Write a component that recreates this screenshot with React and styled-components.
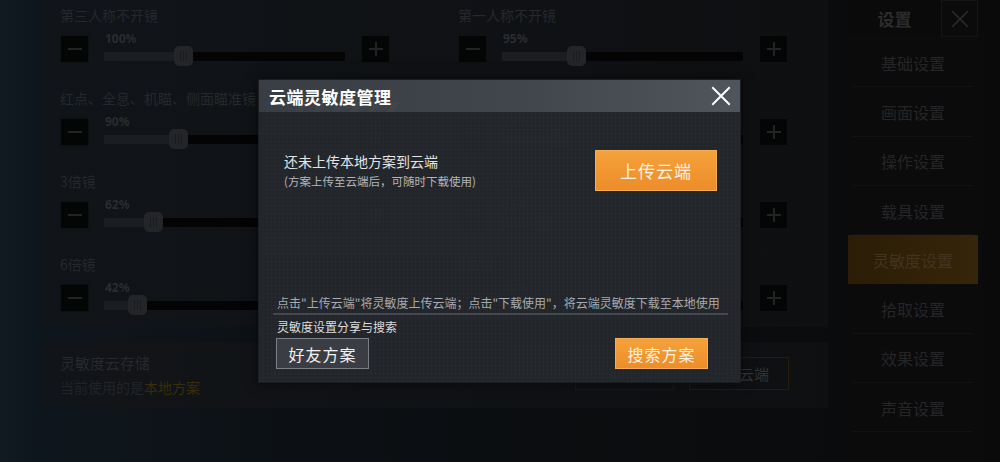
import React from 'react';
import styled, { createGlobalStyle } from 'styled-components';

const GlobalStyle = createGlobalStyle`
  html, body { margin: 0; padding: 0; width: 1000px; height: 462px; overflow: hidden; background: #0b0c0e; }
  body { font-family: "Noto Sans CJK SC", "Noto Sans", sans-serif; }
  * { box-sizing: border-box; }
`;

const Screen = styled.div`
  position: relative;
  width: 1000px;
  height: 462px;
  overflow: hidden;
  display: flex;
  background: linear-gradient(90deg, #111a22 0%, #0e161d 4%, #0c1014 30%, #0b0c0e 70%, #0a0a0b 100%);
`;

const Gutter = styled.div`
  width: 40px;
  flex: none;
`;

const MainColumn = styled.div`
  width: 788px;
  flex: none;
  display: flex;
  flex-direction: column;
  gap: 15px;
`;

const SlidersCard = styled.div`
  height: 327px;
  padding: 5px 39px 0 20px;
  display: grid;
  grid-template-columns: 330px 331px;
  column-gap: 68px;
  background: linear-gradient(90deg, rgba(17, 20, 24, 0.85), rgba(15, 16, 18, 0.85));
`;

const Column = styled.div`
  display: flex;
  flex-direction: column;
  gap: 22px;
`;

const Row = styled.div`
  display: flex;
  flex-direction: column;
`;

const Label = styled.div`
  font-size: 14px;
  line-height: 20px;
  height: 20px;
  color: #25282d;
  margin-bottom: 7px;
  white-space: nowrap;
`;

const Controls = styled.div`
  height: 34px;
  display: flex;
  align-items: center;
`;

const StepButton = styled.div`
  width: 29px;
  height: 28px;
  flex: none;
  background: #040505;
  border: 1px solid #0f1012;
  display: flex;
  align-items: center;
  justify-content: center;
`;

const SliderWrap = styled.div`
  width: 241px;
  flex: none;
  margin: 0 16px 0 15px;
  display: flex;
  flex-direction: column;
`;

const Percent = styled.div`
  font-family: "Noto Sans", "Noto Sans CJK SC", sans-serif;
  font-weight: 700;
  font-size: 12px;
  line-height: 14px;
  color: #2a2c30;
  padding-left: 1px;
`;

const TrackArea = styled.div`
  position: relative;
  height: 20px;
  display: flex;
  align-items: center;
`;

const TrackBar = styled.div`
  width: 100%;
  height: 9px;
  border-radius: 1px;
  background: linear-gradient(90deg, #1b1d20 ${(p) => p.$pos}%, #040405 ${(p) => p.$pos}%);
`;

const Thumb = styled.div`
  position: absolute;
  top: 0;
  width: 19px;
  height: 20px;
  border-radius: 5px;
  background: #242528;
  display: flex;
  align-items: center;
  justify-content: center;
  gap: 2px;
  & > i {
    display: block;
    width: 1px;
    height: 10px;
    background: #1a1b1d;
  }
`;

const CloudCard = styled.div`
  height: 66px;
  padding: 0 39px 0 20px;
  display: flex;
  align-items: center;
  justify-content: space-between;
  background: linear-gradient(90deg, rgba(18, 20, 24, 0.9), rgba(15, 16, 18, 0.9));
`;

const CloudText = styled.div`
  display: flex;
  flex-direction: column;
`;

const CloudTitle = styled.div`
  font-size: 15px;
  line-height: 24px;
  color: #26292d;
`;

const CloudSub = styled.div`
  font-size: 14px;
  line-height: 24px;
  color: #212428;
  & > span {
    color: #382d08;
  }
`;

const CloudButtons = styled.div`
  display: flex;
  gap: 15px;
  margin-top: -3px;
`;

const GhostButton = styled.div`
  width: ${(p) => p.$w}px;
  height: 33px;
  border: 1px solid ${(p) => (p.$accent ? '#261b0c' : '#19191b')};
  color: #323335;
  font-size: 15px;
  display: flex;
  align-items: center;
  justify-content: center;
`;

const Sidebar = styled.div`
  width: 130px;
  flex: none;
  margin-left: 20px;
  display: flex;
  flex-direction: column;
  background: #0b0b0c;
`;

const SideHeader = styled.div`
  height: 37px;
  display: flex;
  margin-bottom: 1px;
`;

const SideTitle = styled.div`
  flex: 1;
  display: flex;
  align-items: center;
  justify-content: center;
  font-size: 17px;
  font-weight: 700;
  color: #2c2c2e;
  background: #0a0a0b;
`;

const SideClose = styled.div`
  width: 37px;
  height: 37px;
  border: 1px solid #141416;
  display: flex;
  align-items: center;
  justify-content: center;
`;

const SideItem = styled.div`
  height: 49.3px;
  display: flex;
  align-items: center;
  justify-content: center;
  font-size: 16px;
  color: ${(p) => (p.$active ? '#433420' : '#252527')};
  background: ${(p) =>
    p.$active
      ? 'linear-gradient(90deg, #2b1d06, #35250a)'
      : 'linear-gradient(#121213, #121213) no-repeat center bottom / calc(100% - 10px) 1px'};
`;

const Dialog = styled.div`
  position: absolute;
  left: 258px;
  top: 79px;
  width: 483px;
  height: 304px;
  display: flex;
  flex-direction: column;
  border: 1px solid #1b1d20;
  box-shadow: 0 0 12px rgba(0, 0, 0, 0.5);
`;

const DialogHeader = styled.div`
  height: 32px;
  flex: none;
  display: flex;
  align-items: center;
  justify-content: space-between;
  padding: 0 9px 0 10px;
  background:
    repeating-linear-gradient(120deg, rgba(255, 255, 255, 0) 0 10px, rgba(255, 255, 255, 0.025) 10px 16px) 30px 22px / 110px 10px no-repeat,
    linear-gradient(90deg, #393e44 0%, #40454b 50%, #4f555c 100%);
`;

const DialogTitle = styled.div`
  font-size: 17px;
  font-weight: 700;
  color: #ffffff;
  letter-spacing: 0.5px;
`;

const DialogBody = styled.div`
  flex: 1;
  display: flex;
  flex-direction: column;
  background-color: rgba(36, 39, 43, 0.95);
  background-image:
    repeating-linear-gradient(0deg, rgba(255, 255, 255, 0.012) 0 1px, transparent 1px 4px),
    repeating-linear-gradient(90deg, rgba(255, 255, 255, 0.012) 0 1px, transparent 1px 4px);
`;

const TopRow = styled.div`
  display: flex;
  align-items: center;
  justify-content: space-between;
  padding: 38px 23px 0 25px;
`;

const UploadInfo = styled.div`
  display: flex;
  flex-direction: column;
`;

const UploadTitle = styled.div`
  font-size: 14px;
  line-height: 20px;
  color: #e4e4e4;
`;

const UploadSub = styled.div`
  font-size: 11.5px;
  line-height: 20px;
  color: #b2b5ba;
`;

const OrangeButton = styled.div`
  width: ${(p) => p.$w}px;
  height: ${(p) => p.$h}px;
  font-size: ${(p) => p.$fs}px;
  display: flex;
  align-items: center;
  justify-content: center;
  color: #fff3e4;
  letter-spacing: 1px;
  border: 1px solid #f6ae55;
  background: linear-gradient(180deg, #f5a23c 0%, #f0952f 60%, #ec8d2a 100%);
`;

const Spacer = styled.div`
  flex: 1;
`;

const Bottom = styled.div`
  display: flex;
  flex-direction: column;
  padding: 0 12px 13px 14px;
`;

const InfoText = styled.div`
  font-size: 12px;
  line-height: 16px;
  color: #a7aaaf;
  padding-left: 4px;
  margin-bottom: 2px;
  white-space: nowrap;
`;

const Divider = styled.div`
  height: 2px;
  background: #44484e;
  margin-bottom: 4px;
`;

const ShareLabel = styled.div`
  font-size: 12px;
  line-height: 16px;
  color: #dcdcdc;
  padding-left: 4px;
  margin-bottom: 3px;
`;

const ButtonRow = styled.div`
  display: flex;
  justify-content: space-between;
  padding: 0 20px 0 3px;
`;

const GrayButton = styled.div`
  width: 93px;
  height: 31px;
  display: flex;
  align-items: center;
  justify-content: center;
  font-size: 16px;
  color: #f2f2f2;
  letter-spacing: 1px;
  background: #3a3e44;
  border: 1px solid #7b7f85;
`;

const MinusIcon = () => (
  <svg width="16" height="16" viewBox="0 0 16 16">
    <rect x="1" y="7" width="14" height="2" fill="#212326" />
  </svg>
);

const PlusIcon = () => (
  <svg width="16" height="16" viewBox="0 0 16 16">
    <rect x="1" y="7" width="14" height="2" fill="#212326" />
    <rect x="7" y="1" width="2" height="14" fill="#212326" />
  </svg>
);

const CloseIcon = ({ size, color, stroke }) => (
  <svg width={size} height={size} viewBox="0 0 20 20">
    <path d="M2 2 L18 18 M18 2 L2 18" stroke={color} strokeWidth={stroke} strokeLinecap="square" fill="none" />
  </svg>
);

const leftRows = [
  { label: '第三人称不开镜', value: '100%', pos: 33 },
  { label: '红点、全息、机瞄、侧面瞄准镜', value: '90%', pos: 31 },
  { label: '3倍镜', value: '62%', pos: 20.5 },
  { label: '6倍镜', value: '42%', pos: 14 },
];

const rightRows = [
  { label: '第一人称不开镜', value: '95%', pos: 31 },
  { label: '2倍镜', value: '75%', pos: 24 },
  { label: '4倍镜、VSS', value: '55%', pos: 17 },
  { label: '8倍镜', value: '40%', pos: 13 },
];

const menu = ['基础设置', '画面设置', '操作设置', '载具设置', '灵敏度设置', '拾取设置', '效果设置', '声音设置'];

const SliderRow = ({ label, value, pos }) => (
  <Row>
    <Label>{label}</Label>
    <Controls>
      <StepButton>
        <MinusIcon />
      </StepButton>
      <SliderWrap>
        <Percent>{value}</Percent>
        <TrackArea>
          <TrackBar $pos={pos} />
          <Thumb style={{ left: `calc(${pos}% - 9.5px)` }}>
            <i />
            <i />
            <i />
          </Thumb>
        </TrackArea>
      </SliderWrap>
      <StepButton>
        <PlusIcon />
      </StepButton>
    </Controls>
  </Row>
);

export default function App() {
  return (
    <>
      <GlobalStyle />
      <Screen>
        <Gutter />
        <MainColumn>
          <SlidersCard>
            <Column>
              {leftRows.map((r) => (
                <SliderRow key={r.label} {...r} />
              ))}
            </Column>
            <Column>
              {rightRows.map((r) => (
                <SliderRow key={r.label} {...r} />
              ))}
            </Column>
          </SlidersCard>
          <CloudCard>
            <CloudText>
              <CloudTitle>灵敏度云存储</CloudTitle>
              <CloudSub>
                当前使用的是<span>本地方案</span>
              </CloudSub>
            </CloudText>
            <CloudButtons>
              <GhostButton $w={99}>下载使用</GhostButton>
              <GhostButton $w={100} $accent>
                上传云端
              </GhostButton>
            </CloudButtons>
          </CloudCard>
        </MainColumn>
        <Sidebar>
          <SideHeader>
            <SideTitle>设置</SideTitle>
            <SideClose>
              <CloseIcon size={18} color="#28282b" stroke={2} />
            </SideClose>
          </SideHeader>
          {menu.map((m) => (
            <SideItem key={m} $active={m === '灵敏度设置'}>
              {m}
            </SideItem>
          ))}
        </Sidebar>

        <Dialog>
          <DialogHeader>
            <DialogTitle>云端灵敏度管理</DialogTitle>
            <CloseIcon size={20} color="#ffffff" stroke={2} />
          </DialogHeader>
          <DialogBody>
            <TopRow>
              <UploadInfo>
                <UploadTitle>还未上传本地方案到云端</UploadTitle>
                <UploadSub>(方案上传至云端后，可随时下载使用)</UploadSub>
              </UploadInfo>
              <OrangeButton $w={122} $h={41} $fs={17}>
                上传云端
              </OrangeButton>
            </TopRow>
            <Spacer />
            <Bottom>
              <InfoText>点击"上传云端"将灵敏度上传云端；点击"下载使用"，将云端灵敏度下载至本地使用</InfoText>
              <Divider />
              <ShareLabel>灵敏度设置分享与搜索</ShareLabel>
              <ButtonRow>
                <GrayButton>好友方案</GrayButton>
                <OrangeButton $w={93} $h={31} $fs={16}>
                  搜索方案
                </OrangeButton>
              </ButtonRow>
            </Bottom>
          </DialogBody>
        </Dialog>
      </Screen>
    </>
  );
}
